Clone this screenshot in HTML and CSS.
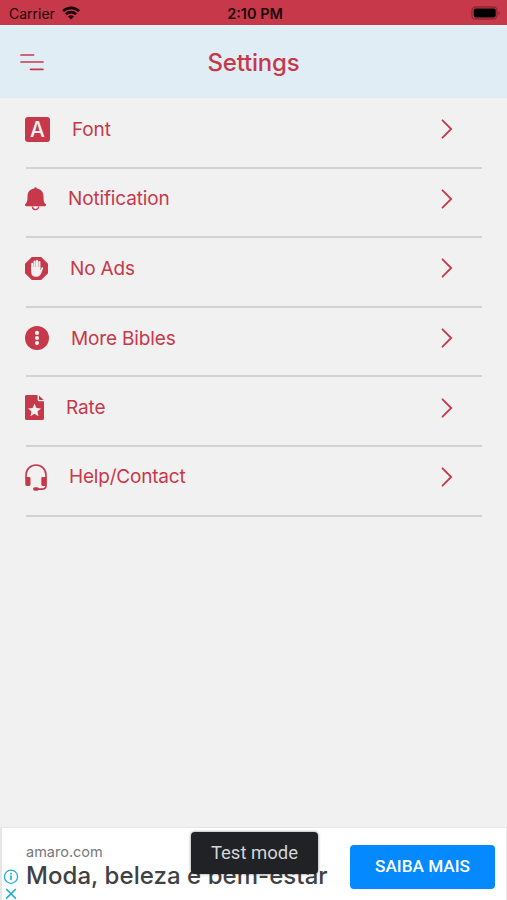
FILE: index.html
```html
<!DOCTYPE html>
<html lang="en">
<head>
    <meta charset="utf-8">
    <title>Settings</title>
    <link rel="stylesheet" href="styles.css">
</head>
<body>
<div class="screen">
    <div class="status-bar">
        <div class="carrier">
            <span>Carrier</span>
            <svg class="wifi" viewBox="0 0 18 14" fill="none" stroke="#190509" stroke-width="2.6">
                <path d="M1 5.1a11.5 11.5 0 0 1 16 0"/>
                <path d="M3.9 8.2a7.3 7.3 0 0 1 10.2 0"/>
                <path d="M9 13.6L5.9 10.5a4.4 4.4 0 0 1 6.2 0z" fill="#190509" stroke="none"/>
            </svg>
        </div>
        <span class="time">2:10 PM</span>
        <svg class="battery" viewBox="0 0 30 14">
            <rect x="1" y="1" width="25" height="12" rx="3.5" fill="none" stroke="#8f2634" stroke-width="1.3"/>
            <rect x="2.7" y="2.6" width="22" height="8.8" rx="2" fill="#000"/>
            <path d="M27.6 5v4a2.2 2.2 0 0 0 0-4z" fill="#8f2634"/>
        </svg>
    </div>
    <div class="header">
        <svg class="menu" viewBox="0 0 24 18" stroke="#c7384a" stroke-width="1.7" stroke-linecap="round">
            <path d="M1 2h12.5M1 9h22M10.5 16.3H23"/>
        </svg>
        <h1 class="title">Settings</h1>
    </div>
    <div class="list">
        <div class="row font">
            <span class="icon letter">A</span>
            <span class="label">Font</span>
            <svg class="chevron" viewBox="0 0 12 20"><path d="M1.5 1.3L10.2 10l-8.7 8.7"/></svg>
        </div>
        <div class="row notification">
            <svg class="icon" width="21" height="24" viewBox="0 0 21 24" fill="#c7384a">
                <path d="M10.5.2c.8 0 1.2.6 1.2 1.4 4.2.6 6.8 3.6 6.8 7.6 0 4.7.6 6.3 2.1 7.9.8.9.3 2.2-.8 2.2H1.2c-1.1 0-1.6-1.3-.8-2.2 1.5-1.6 2.1-3.2 2.1-7.9 0-4 2.6-7 6.8-7.6 0-.8.4-1.4 1.2-1.4z"/>
                <path d="M7.4 19.5a3.1 3.1 0 0 0 6.2 0" fill="none" stroke="#c7384a" stroke-width="1.3"/>
            </svg>
            <span class="label">Notification</span>
            <svg class="chevron" viewBox="0 0 12 20"><path d="M1.5 1.3L10.2 10l-8.7 8.7"/></svg>
        </div>
        <div class="row ads">
            <svg class="icon" width="23" height="23" viewBox="0 0 23 23">
                <path d="M6.8 0h9.4L23 6.8v9.4L16.2 23H6.8L0 16.2V6.8z" fill="#c7384a"/>
                <path d="M7.2 12V6.7M9.6 11V4.5M12 11V3.7M14.4 11V5" stroke="#f1f1f1" stroke-width="2.1" stroke-linecap="round"/>
                <path d="M6.2 10h9.2v3.2l1.1-2.3c.5-1 1.9-.6 1.6.5l-2 5.2c-.8 2.1-2.1 3.1-4.3 3.1h-1c-3 0-4.6-2-4.6-4.8z" fill="#f1f1f1"/>
            </svg>
            <span class="label">No Ads</span>
            <svg class="chevron" viewBox="0 0 12 20"><path d="M1.5 1.3L10.2 10l-8.7 8.7"/></svg>
        </div>
        <div class="row bibles">
            <svg class="icon" width="24" height="24" viewBox="0 0 24 24">
                <circle cx="12" cy="12" r="12" fill="#c7384a"/>
                <g fill="#f1f1f1">
                    <circle cx="12" cy="6.9" r="2.1"/>
                    <circle cx="12" cy="12" r="2.1"/>
                    <circle cx="12" cy="17.1" r="2.1"/>
                </g>
            </svg>
            <span class="label">More Bibles</span>
            <svg class="chevron" viewBox="0 0 12 20"><path d="M1.5 1.3L10.2 10l-8.7 8.7"/></svg>
        </div>
        <div class="row rate">
            <svg class="icon" width="19" height="25" viewBox="0 0 19 25">
                <path d="M1.5 0H12.6v4.8c0 .9.6 1.5 1.5 1.5H19v17.2c0 .9-.6 1.5-1.5 1.5h-16C.6 25 0 24.4 0 23.5v-22C0 .6.6 0 1.5 0z" fill="#c7384a"/>
                <path d="M14 .4L18.6 5H14.8a.8.8 0 0 1-.8-.8z" fill="#c7384a"/>
                <path d="M9.5 8.6l1.9 4.3 4.6.5-3.5 3.1 1 4.7-4-2.4-4 2.4 1-4.7L3 13.4l4.6-.5z" fill="#f1f1f1"/>
            </svg>
            <span class="label">Rate</span>
            <svg class="chevron" viewBox="0 0 12 20"><path d="M1.5 1.3L10.2 10l-8.7 8.7"/></svg>
        </div>
        <div class="row help">
            <svg class="icon" width="22" height="27" viewBox="0 0 22 27" fill="#c7384a">
                <path d="M1 15v-4a10 10 0 0 1 20 0v10.5c0 2.2-1.2 3.6-3.5 3.6H11" fill="none" stroke="#c7384a" stroke-width="1.6"/>
                <rect x=".3" y="13" width="5.2" height="9" rx="1.4"/>
                <rect x="16.3" y="13" width="5.2" height="9" rx="1.4"/>
                <rect x="8" y="23.2" width="6" height="3.6" rx="1.8"/>
            </svg>
            <span class="label">Help/Contact</span>
            <svg class="chevron" viewBox="0 0 12 20"><path d="M1.5 1.3L10.2 10l-8.7 8.7"/></svg>
        </div>
    </div>
    <div class="ad">
        <div class="ad-marks">
            <svg width="16" height="16" viewBox="0 0 16 16" fill="none" stroke="#1fadce" stroke-width="1.3">
                <circle cx="8" cy="8" r="6.8"/>
                <path d="M8 6.8v5M8 3.8v1.8" stroke-width="1.7"/>
            </svg>
            <svg width="16" height="12" viewBox="0 0 16 12" stroke="#1fadce" stroke-width="1.6">
                <path d="M3 1l10 10M13 1L3 11"/>
            </svg>
        </div>
        <div class="ad-text">
            <span class="ad-site">amaro.com</span>
            <span class="ad-title">Moda, beleza e bem-estar</span>
        </div>
        <div class="ad-button">SAIBA MAIS</div>
        <div class="test-mode">Test mode</div>
    </div>
</div>
</body>
</html>
```

FILE: styles.css
```css
* {
    margin: 0;
    padding: 0;
    box-sizing: border-box;
}

body {
    background-color: #f1f1f1;
    font-family: Inter, "Liberation Sans", sans-serif;
}

.screen {
    display: flex;
    flex-direction: column;
    width: 507px;
    height: 900px;
    overflow: hidden;
}

.status-bar {
    display: grid;
    grid-template-columns: 1fr auto 1fr;
    align-items: center;
    height: 25px;
    padding: 1px 6px 0 9px;
    background-color: #c7384a;
    color: #190509;
    font-size: 14px;
}

.carrier {
    display: flex;
    align-items: center;
    gap: 7px;
}

.wifi {
    width: 18px;
    height: 14px;
}

.time {
    font-size: 14.5px;
    font-weight: 600;
}

.battery {
    width: 30px;
    height: 14px;
    justify-self: end;
}

.header {
    display: grid;
    grid-template-columns: 60px 1fr 60px;
    align-items: center;
    height: 73px;
    background-color: #e0edf5;
    border-top: 1px solid #f2f6f8;
}

.menu {
    width: 24px;
    height: 18px;
    margin-left: 20px;
}

.title {
    color: #c7384a;
    font-size: 24px;
    font-weight: 500;
    letter-spacing: -0.2px;
    text-align: center;
}

.list {
    flex: 1;
    padding: 1px 25px 0 26px;
}

.row {
    display: flex;
    align-items: center;
    height: 69.6px;
    padding: 0 29px 7px 0;
    border-bottom: 2px solid #d2d2d3;
    color: #c7384a;
}

.icon {
    flex: none;
    margin: 0 22px 0 -1px;
}

.letter {
    width: 25px;
    height: 25px;
    border-radius: 3px;
    background-color: #c7384a;
    color: #f1f1f1;
    font-size: 21px;
    font-weight: 500;
    line-height: 25px;
    text-align: center;
}

.label {
    flex: 1;
    font-size: 19px;
    letter-spacing: -0.15px;
}

.help .label {
    letter-spacing: -0.2px;
    padding-bottom: 2px;
}

.chevron {
    width: 12px;
    height: 20px;
    fill: none;
    stroke: #c7384a;
    stroke-width: 1.8;
    stroke-linecap: round;
}

.ad {
    position: relative;
    display: flex;
    height: 73px;
    background-color: #fff;
    border: 1px solid #e6e6e6;
    border-width: 1px 1px 0 2px;
}

.ad-marks {
    display: flex;
    flex-direction: column;
    gap: 4px;
    width: 24px;
    padding: 41px 0 0 1px;
}

.ad-text {
    display: flex;
    flex-direction: column;
    flex: 1;
    padding-top: 15px;
    white-space: nowrap;
}

.ad-site {
    color: #77787a;
    font-size: 14.5px;
    line-height: 17px;
}

.ad-title {
    color: #404144;
    font-size: 24px;
    font-weight: 500;
    letter-spacing: 0.05px;
    line-height: 32px;
}

.ad-button {
    width: 145px;
    height: 44px;
    margin: 17px 11px 0 0;
    border-radius: 4px;
    background-color: #0489ff;
    color: #fff;
    font-family: Roboto, sans-serif;
    font-size: 17.2px;
    font-weight: 500;
    line-height: 42px;
    text-align: center;
}

.test-mode {
    position: absolute;
    top: 4px;
    left: 189px;
    width: 127px;
    height: 42px;
    border-radius: 4px;
    background-color: #202226;
    box-shadow: 0 0 3px rgba(0, 0, 0, 0.5);
    color: #d4d5d6;
    font-family: Roboto, sans-serif;
    font-size: 18.5px;
    line-height: 42px;
    text-align: center;
}
```
